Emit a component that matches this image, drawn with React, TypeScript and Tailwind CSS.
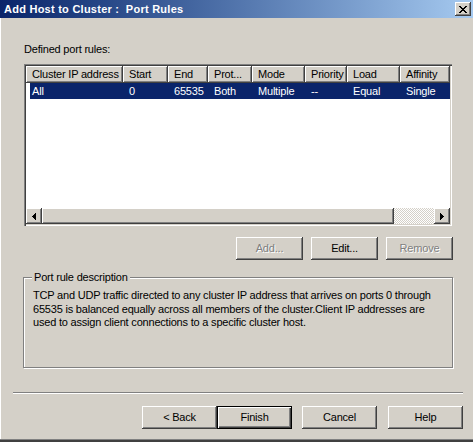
import React from "react";

const raised =
  "bg-[#d4d0c8] shadow-[inset_-1px_-1px_0_#404040,inset_1px_1px_0_#ffffff,inset_-2px_-2px_0_#808080]";

const columns = [
  { label: "Cluster IP address", w: "w-[97px]", value: "All" },
  { label: "Start", w: "w-[45px]", value: "0" },
  { label: "End", w: "w-[40px]", value: "65535" },
  { label: "Prot...", w: "w-[44px]", value: "Both" },
  { label: "Mode", w: "w-[53px]", value: "Multiple" },
  { label: "Priority", w: "w-[42px]", value: "--" },
  { label: "Load", w: "w-[53px]", value: "Equal" },
  { label: "Affinity", w: "w-[50px]", value: "Single" },
];

function Button({
  children,
  disabled,
  isDefault,
  className = "",
}: {
  children: React.ReactNode;
  disabled?: boolean;
  isDefault?: boolean;
  className?: string;
}) {
  const frame = isDefault
    ? "border border-black bg-[#d4d0c8] shadow-[inset_1px_1px_0_#ffffff,inset_-1px_-1px_0_#404040,inset_-2px_-2px_0_#808080]"
    : raised;
  return (
    <div
      className={`${frame} h-[23px] flex items-center justify-center text-[11px] ${
        disabled ? "text-[#808080] [text-shadow:1px_1px_0_#ffffff]" : "text-black"
      } ${className}`}
    >
      {children}
    </div>
  );
}

function Arrow({ dir }: { dir: "left" | "right" }) {
  return (
    <svg width="4" height="7" viewBox="0 0 4 7" shapeRendering="crispEdges">
      {dir === "left" ? (
        <polygon points="4,0 0,3.5 4,7" fill="#000" />
      ) : (
        <polygon points="0,0 4,3.5 0,7" fill="#000" />
      )}
    </svg>
  );
}

export default function App() {
  return (
    <div
      className="w-[473px] h-[442px] flex flex-col bg-[#d4d0c8] overflow-hidden text-black tracking-[-0.2px]"
      style={{ fontFamily: '"Liberation Sans", Arial, sans-serif' }}
    >
      {/* Title bar */}
      <div className="h-[18px] shrink-0 flex items-center justify-between pl-[4px] pr-[2px] bg-gradient-to-r from-[#0a246a] to-[#a6caf0]">
        <span className="text-white font-bold text-[11px] leading-[18px] whitespace-pre tracking-[0.25px]">
          Add Host to Cluster :  Port Rules
        </span>
        <div className={`${raised} w-[16px] h-[14px] flex items-center justify-center`}>
          <svg width="8" height="7" viewBox="0 0 8 7" shapeRendering="crispEdges">
            <path d="M0 0h2v1h-2zM6 0h2v1h-2zM1 1h2v1h-2zM5 1h2v1h-2zM2 2h4v1h-4zM3 3h2v1h-2zM2 4h4v1h-4zM1 5h2v1h-2zM5 5h2v1h-2zM0 6h2v1h-2zM6 6h2v1h-2z" fill="#000" />
          </svg>
        </div>
      </div>

      {/* Body */}
      <div className="flex-1 flex flex-col border-l border-[#ffffff]">
        <div className="mt-[25px] ml-[23px] text-[11px] leading-[13px]">Defined port rules:</div>

        {/* List view */}
        <div className="mt-[8px] ml-[23px] w-[428px] h-[162px] p-[2px] bg-white flex flex-col shadow-[inset_1px_1px_0_#808080,inset_2px_2px_0_#404040,inset_-1px_-1px_0_#ffffff,inset_-2px_-2px_0_#d4d0c8]">
          <div className="flex h-[17px] shrink-0">
            {columns.map((c) => (
              <div
                key={c.label}
                className={`${raised} ${c.w} shrink-0 pl-[6px] text-[11px] leading-[16px] whitespace-nowrap overflow-hidden`}
              >
                {c.label}
              </div>
            ))}
          </div>
          <div className="flex h-[16px] ml-[4px] bg-[#0a246a] text-white text-[11px] leading-[16px]">
            {columns.map((c, i) => (
              <div
                key={c.label}
                className={`${i === 0 ? "w-[93px] pl-[2px]" : c.w + " pl-[6px]"} shrink-0 whitespace-nowrap`}
              >
                {c.value}
              </div>
            ))}
          </div>
          <div className="flex-1" />
          {/* Horizontal scrollbar */}
          <div className="flex h-[16px] shrink-0">
            <div className={`${raised} w-[16px] flex items-center justify-center`}>
              <Arrow dir="left" />
            </div>
            <div className={`${raised} w-[352px]`} />
            <div className="w-[40px] bg-[repeating-conic-gradient(#ffffff_0_25%,#d4d0c8_0_50%)] bg-[length:2px_2px]" />
            <div className={`${raised} w-[16px] flex items-center justify-center`}>
              <Arrow dir="right" />
            </div>
          </div>
        </div>

        {/* List buttons */}
        <div className="mt-[11px] flex justify-end gap-[8px] pr-[20px]">
          <Button disabled className="w-[67px]">Add...</Button>
          <Button className="w-[67px]">Edit...</Button>
          <Button disabled className="w-[67px]">Remove</Button>
        </div>

        {/* Group box */}
        <div className="relative mt-[17px] ml-[22px] w-[430px] h-[91px] border border-[#808080] shadow-[inset_1px_1px_0_#ffffff,1px_1px_0_#ffffff]">
          <div className="absolute -top-[7px] left-[8px] px-[2px] bg-[#d4d0c8] text-[11px] leading-[13px]">
            Port rule description
          </div>
          <p className="pt-[11px] pl-[9px] text-[11px] leading-[13.5px] whitespace-nowrap">
            TCP and UDP traffic directed to any cluster IP address that arrives on ports 0 through
            <br />
            65535 is balanced equally across all members of the cluster.Client IP addresses are
            <br />
            used to assign client connections to a specific cluster host.
          </p>
        </div>

        {/* Separator */}
        <div className="mt-[24px] ml-[12px] w-[450px] h-[2px] border-t border-[#808080] border-b border-b-white" />

        {/* Wizard buttons */}
        <div className="mt-[12px] flex pr-[10px]">
          <Button className="ml-auto w-[75px]">&lt; Back</Button>
          <Button isDefault className="w-[75px]">Finish</Button>
          <Button className="ml-[10px] w-[75px]">Cancel</Button>
          <Button className="ml-[11px] w-[75px]">Help</Button>
        </div>

        <div className="flex-1" />
      </div>
      <div className="h-[1px] shrink-0 bg-[#808080]" />
      <div className="h-[2px] shrink-0 bg-[#404040]" />
    </div>
  );
}
